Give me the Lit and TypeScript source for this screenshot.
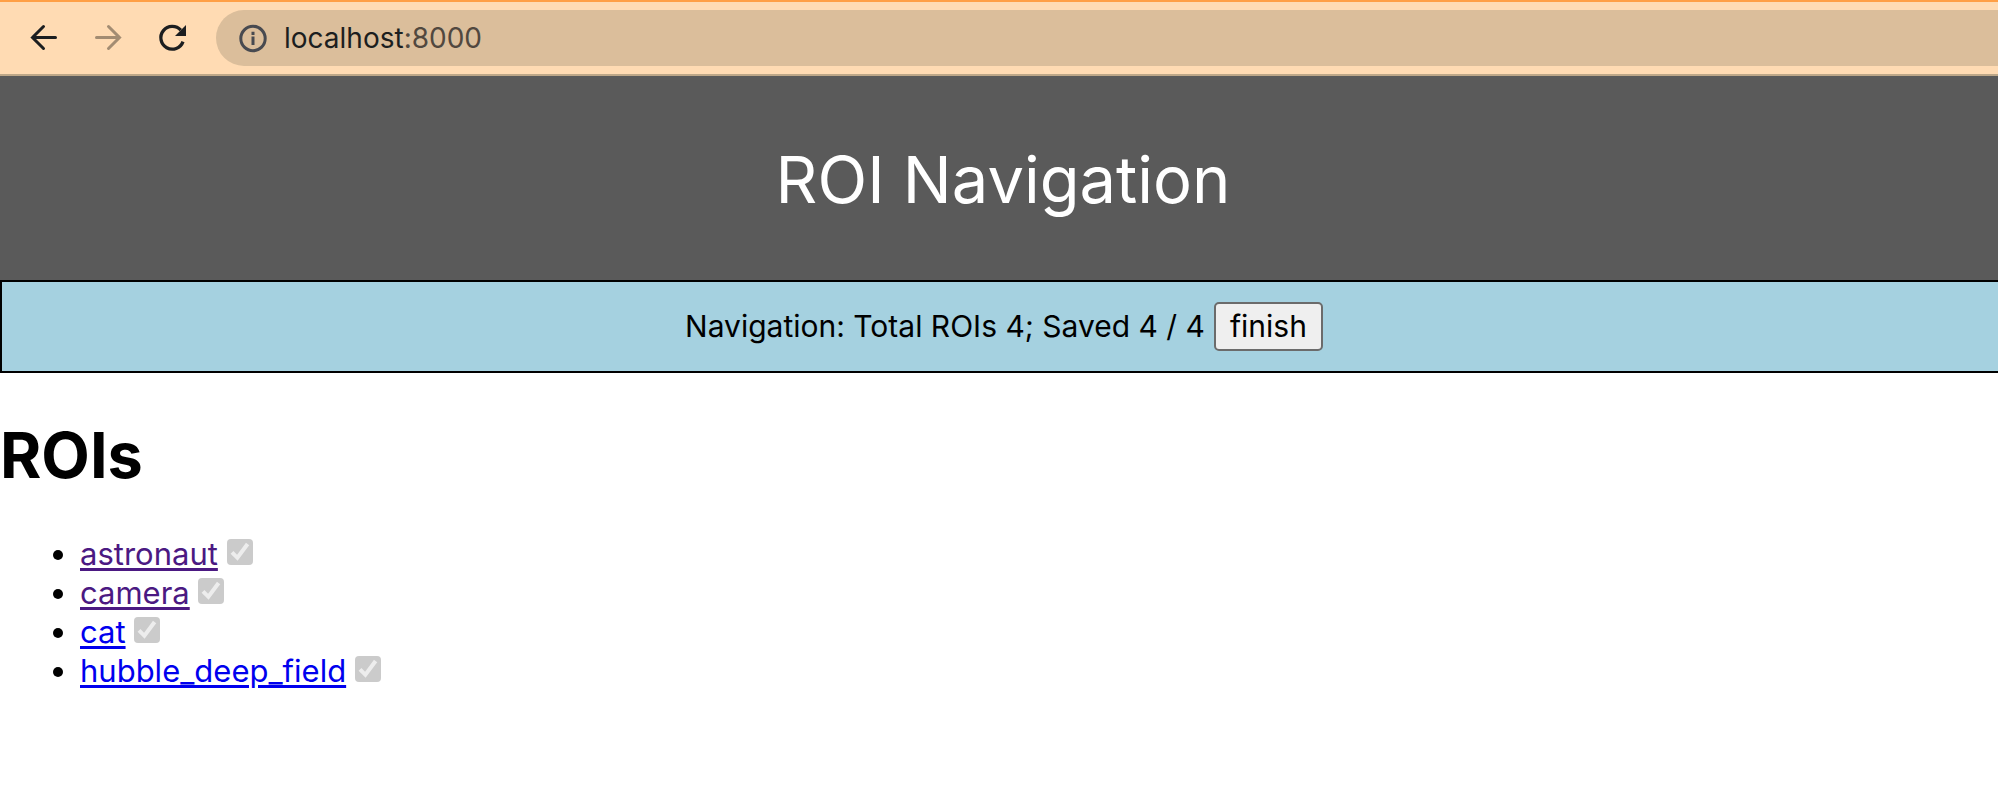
import { LitElement, html, css } from "lit";
import { customElement } from "lit/decorators.js";

interface Roi {
  name: string;
  visited: boolean;
  saved: boolean;
}

@customElement("browser-bar")
export class BrowserBar extends LitElement {
  static styles = css`
    :host { display: block; }
    .bar {
      display: flex;
      align-items: center;
      gap: 20px;
      padding: 8px 0 8px 20px;
      background: #ffdbb3;
      border-top: 2px solid #ff9f45;
      border-bottom: 2px solid #bda788;
    }
    .tools { display: flex; gap: 16px; }
    .tool {
      display: block;
      width: 48px;
      height: 48px;
      padding: 0;
      border: 0;
      background: none;
      color: #1c1e20;
    }
    .tool:disabled { color: #a38c72; }
    .icon { display: block; width: 48px; height: 48px; }
    .address {
      flex: 1;
      display: flex;
      align-items: center;
      gap: 16px;
      height: 56px;
      padding-left: 22px;
      border-radius: 28px 0 0 28px;
      background: #dbbe9b;
      color: #51483f;
      font-size: 28px;
      line-height: 36px;
    }
    .info { display: block; width: 30px; height: 30px; color: #484a50; }
    .host { color: #1c1e20; }
  `;

  render() {
    return html`
      <div class="bar">
        <div class="tools">
          <button class="tool" aria-label="Back">
            <svg class="icon" viewBox="0 0 48 48" fill="none" stroke="currentColor" stroke-width="3" stroke-linecap="round">
              <path d="M35.5 23.5H12.5M23.5 12.5L12.5 23.5L23.5 34.5" />
            </svg>
          </button>
          <button class="tool" aria-label="Forward" disabled>
            <svg class="icon" viewBox="0 0 48 48" fill="none" stroke="currentColor" stroke-width="3" stroke-linecap="round">
              <path d="M12.5 23.5H35.5M24.5 12.5L35.5 23.5L24.5 34.5" />
            </svg>
          </button>
          <button class="tool" aria-label="Reload">
            <svg class="icon" viewBox="0 0 48 48" fill="none" stroke="currentColor" stroke-width="3.3">
              <path d="M35 27.6A11.4 11.4 0 1 1 32.8 16.2" />
              <path d="M38 11V22H27Z" fill="currentColor" stroke="none" />
            </svg>
          </button>
        </div>
        <div class="address">
          <svg class="info" viewBox="0 0 30 30" fill="none" stroke="currentColor" stroke-width="3">
            <circle cx="15" cy="15.5" r="12.2" />
            <path d="M15 13.4V22M15 8.8V12" />
          </svg>
          <span><span class="host">localhost</span>:8000</span>
        </div>
      </div>
    `;
  }
}

@customElement("app-root")
export class AppRoot extends LitElement {
  private rois: Roi[] = [
    { name: "astronaut", visited: true, saved: true },
    { name: "camera", visited: true, saved: true },
    { name: "cat", visited: false, saved: true },
    { name: "hubble_deep_field", visited: false, saved: true },
  ];

  static styles = css`
    :host {
      display: block;
      font-family: Inter, "Liberation Sans", sans-serif;
      font-size: 31px;
      line-height: 39px;
      color: #000;
      background: #fff;
    }
    .hero {
      padding: 62px 0 58px 8px;
      background: #5a5a5a;
      color: #fff;
      text-align: center;
    }
    .title { margin: 0; font-size: 65px; line-height: 84px; font-weight: 400; }
    .nav {
      display: flex;
      justify-content: center;
      align-items: center;
      gap: 9px;
      padding: 20px 0 20px 8px;
      border: 2px solid #000;
      border-right: 0;
      background: #a5d1e0;
      font-size: 30px;
    }
    .finish {
      height: 49px;
      padding: 0 14px;
      border: 2px solid #6b6b6b;
      border-radius: 5px;
      background: #efefef;
      color: #000;
      font: inherit;
    }
    .heading { margin: 44px 0 41px; font-size: 63px; line-height: 76px; font-weight: 700; }
    .list { margin: 0; padding-left: 80px; }
    .link {
      color: #0000ee;
      text-decoration-thickness: 3px;
      text-underline-offset: 3px;
    }
    .seen { color: #4b1982; }
    .check {
      appearance: none;
      width: 26px;
      height: 26px;
      margin: 0;
      border-radius: 4px;
      vertical-align: baseline;
      background: #cbcbcb url("data:image/svg+xml,%3Csvg xmlns='http://www.w3.org/2000/svg' viewBox='0 0 26 26' fill='none' stroke='%23ededed' stroke-width='4'%3E%3Cpath d='M5 13.4L10.4 18.8L20.6 5'/%3E%3C/svg%3E");
    }
  `;

  render() {
    const saved = this.rois.filter((r) => r.saved).length;
    const total = this.rois.length;
    return html`
      <browser-bar></browser-bar>
      <header class="hero"><h1 class="title">ROI Navigation</h1></header>
      <nav class="nav">
        <span>Navigation: Total ROIs ${total}; Saved ${saved} / ${total}</span>
        <button class="finish">finish</button>
      </nav>
      <main>
        <h2 class="heading">ROIs</h2>
        <ul class="list">
          ${this.rois.map(
            (r) => html`<li>
              <a class="link ${r.visited ? "seen" : ""}" href="#${r.name}">${r.name}</a>
              <input class="check" type="checkbox" aria-label="${r.name} saved" .checked=${r.saved} disabled />
            </li>`
          )}
        </ul>
      </main>
    `;
  }
}
